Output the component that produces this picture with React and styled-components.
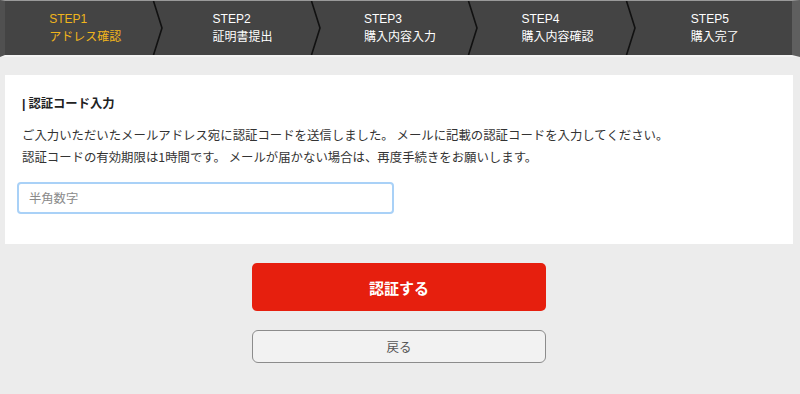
import React from "react";
import styled, { createGlobalStyle } from "styled-components";

const Global = createGlobalStyle`
  html, body { margin: 0; padding: 0; background: #ececec; }
  body { font-family: "Liberation Sans", "Noto Sans CJK JP", sans-serif; }
  * { box-sizing: border-box; }
`;

const Page = styled.div`
  width: 800px;
  min-height: 394px;
  background: #ececec;
  display: flex;
  flex-direction: column;
`;

const StepBar = styled.div`
  display: flex;
  height: 57px;
  background: #444444;
  border-top: 1px solid #9a9a9a;
  border-left: 5px solid #505050;
  border-right: 8px solid #5f5f5f;
  border-bottom: 2px solid #f4f4f4;
`;

const Step = styled.div`
  position: relative;
  flex: 1;
  display: flex;
  align-items: center;
  justify-content: center;
`;

const StepText = styled.div`
  font-size: 12px;
  line-height: 18px;
  color: ${(p) => (p.$active ? "#f0b41c" : "#ffffff")};
  text-align: left;
  padding-left: 3px;
`;

const Chevron = styled.svg`
  position: absolute;
  right: -1px;
  top: 0;
  width: 11px;
  height: 100%;
`;

const Card = styled.section`
  margin: 18px 7px 0 5px;
  background: #ffffff;
  padding: 17px 12px 30px;
`;

const Heading = styled.h2`
  margin: 0 0 9px;
  padding-left: 5px;
  font-size: 12.3px;
  line-height: 22px;
  font-weight: bold;
  color: #222;
  font-family: "Noto Sans CJK JP", sans-serif;
`;

const Bar = styled.span`
  font-family: "Liberation Sans", sans-serif;
  margin-right: 3px;
`;

const Text = styled.p`
  margin: 0 0 14px;
  padding-left: 5px;
  font-size: 12.4px;
  line-height: 22px;
  color: #333;
  font-family: "Noto Sans CJK JP", sans-serif;
`;

const Input = styled.input`
  display: block;
  width: 377px;
  height: 32px;
  border: 2px solid #a9d1f7;
  border-radius: 4px;
  padding: 0 10px;
  font-size: 12.3px;
  font-family: "Noto Sans CJK JP", sans-serif;
  color: #333;
  outline: none;
  &::placeholder { color: #8a8a8a; }
`;

const Actions = styled.div`
  display: flex;
  flex-direction: column;
  align-items: center;
  padding: 19px 2px 0 0;
  gap: 19px;
`;

const Button = styled.button`
  width: 294px;
  height: ${(p) => (p.$primary ? "48px" : "33px")};
  border-radius: ${(p) => (p.$primary ? "5px" : "6px")};
  border: ${(p) => (p.$primary ? "none" : "1.5px solid #8c8c8c")};
  background: ${(p) => (p.$primary ? "#e61f0e" : "#f2f2f2")};
  color: ${(p) => (p.$primary ? "#ffffff" : "#555")};
  font-family: "Noto Sans CJK JP", sans-serif;
  font-size: ${(p) => (p.$primary ? "15px" : "12.5px")};
  font-weight: ${(p) => (p.$primary ? "bold" : "normal")};
  cursor: pointer;
  padding: 0;
`;

const steps = [
  ["STEP1", "アドレス確認"],
  ["STEP2", "証明書提出"],
  ["STEP3", "購入内容入力"],
  ["STEP4", "購入内容確認"],
  ["STEP5", "購入完了"],
];

export default function App() {
  return (
    <Page>
      <Global />
      <StepBar>
        {steps.map(([s, label], i) => (
          <Step key={s}>
            <StepText $active={i === 0}>
              {s}
              <br />
              {label}
            </StepText>
            {i < steps.length - 1 && (
              <Chevron viewBox="0 0 11 55" preserveAspectRatio="none">
                <polyline points="1.5,0 10,27.5 1.5,55" fill="none" stroke="#111" strokeWidth="1.6" />
              </Chevron>
            )}
          </Step>
        ))}
      </StepBar>
      <Card>
        <Heading>
          <Bar>|</Bar>認証コード入力
        </Heading>
        <Text>
          ご入力いただいたメールアドレス宛に認証コードを送信しました。 メールに記載の認証コードを入力してください。
          <br />
          認証コードの有効期限は1時間です。 メールが届かない場合は、再度手続きをお願いします。
        </Text>
        <Input placeholder="半角数字" />
      </Card>
      <Actions>
        <Button $primary>認証する</Button>
        <Button>戻る</Button>
      </Actions>
    </Page>
  );
}
